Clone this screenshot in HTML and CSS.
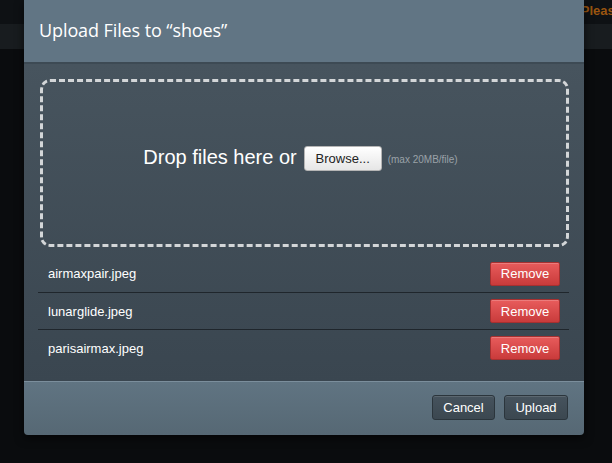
FILE: index.html
```html
<!DOCTYPE html>
<html>
<head>
<meta charset="utf-8">
<link rel="stylesheet" href="styles.css">
</head>
<body>
<div class="page">
  <div class="topbar"><span class="please">Please</span></div>
  <div class="band"></div>
</div>
<div class="modal">
  <div class="modal-header"><h1 class="title">Upload Files to “shoes”</h1></div>
  <div class="modal-body">
    <div class="dropzone">
      <span class="drop-text">Drop files here or</span>
      <button class="browse">Browse...</button>
      <span class="limit">(max 20MB/file)</span>
    </div>
    <ul class="files">
      <li class="file"><span class="name">airmaxpair.jpeg</span><button class="remove">Remove</button></li>
      <li class="file"><span class="name">lunarglide.jpeg</span><button class="remove">Remove</button></li>
      <li class="file"><span class="name">parisairmax.jpeg</span><button class="remove">Remove</button></li>
    </ul>
  </div>
  <div class="modal-footer">
    <button class="btn cancel">Cancel</button>
    <button class="btn upload">Upload</button>
  </div>
</div>
</body>
</html>
```

FILE: styles.css
```css
* { box-sizing: border-box; }
html, body { margin: 0; padding: 0; }
body {
  width: 612px;
  height: 463px;
  overflow: hidden;
  background: #0a0c0e;
  font-family: "Liberation Sans", Arial, sans-serif;
  position: relative;
}
.page { width: 100%; }
.topbar {
  height: 24px;
  background: #0e1114;
  display: flex;
  justify-content: flex-end;
  align-items: flex-start;
}
.please {
  color: #9a5510;
  font-weight: bold;
  font-size: 13px;
  line-height: 13px;
  margin-top: 4px;
  margin-right: -10px;
}
.band {
  height: 25px;
  background: #181c1f;
}
.modal {
  position: absolute;
  left: 24px;
  top: 0;
  width: 560px;
  border-radius: 0 0 4px 4px;
  overflow: hidden;
  box-shadow: 0 3px 10px rgba(0,0,0,0.6);
}
.modal-header {
  height: 64px;
  background: #617584;
  border-bottom: 2px solid #3d4a54;
  display: flex;
  align-items: center;
  padding: 0 15px 2px;
}
.title {
  margin: 0;
  font-family: "Open Sans", "DejaVu Sans", sans-serif;
  font-weight: normal;
  font-size: 18px;
  color: #ffffff;
  letter-spacing: -0.1px;
}
.modal-body {
  background: linear-gradient(#47545e, #3a4650);
  padding: 15px 15px 15px 14px;
}
.dropzone {
  height: 168px;
  margin-left: 2px;
  border: 3px dashed #d3d6d8;
  border-radius: 10px;
  display: flex;
  align-items: center;
  justify-content: center;
  padding: 0 8px 12px 0;
}
.drop-text {
  color: #ffffff;
  font-size: 20px;
  margin-right: 7px;
}
.browse {
  width: 78px;
  height: 25px;
  border: 1px solid #b5b5b5;
  border-radius: 3px;
  background: linear-gradient(#ffffff, #e6e6e6);
  color: #222;
  font-family: "Liberation Sans", Arial, sans-serif;
  font-size: 13px;
  padding: 0;
  margin-top: 2px;
}
.limit {
  color: #9aa2a8;
  font-size: 10px;
  margin-left: 6px;
  margin-top: 4px;
}
.files {
  list-style: none;
  margin: 8px 0 0;
  padding: 0;
}
.file {
  height: 37px;
  display: flex;
  align-items: center;
  justify-content: space-between;
  padding: 0 9px 0 10px;
  border-top: 1px solid #1f262c;
}
.file:first-child { border-top: none; height: 37px; }
.name {
  color: #ffffff;
  font-size: 13px;
}
.remove {
  width: 70px;
  height: 24px;
  border: 1px solid #a73030;
  border-radius: 2px;
  background: linear-gradient(#e85c5c, #c93b3b);
  color: #ffffff;
  font-family: "Liberation Sans", Arial, sans-serif;
  font-size: 13px;
  padding: 0;
  box-shadow: inset 0 1px 0 rgba(255,255,255,0.2);
}
.modal-footer {
  height: 54px;
  background: linear-gradient(#607482, #566874);
  border-top: 1px solid #7b8e9c;
  display: flex;
  justify-content: flex-end;
  align-items: flex-start;
  gap: 9px;
  padding: 13px 16px 0 0;
}
.btn {
  height: 25px;
  border: 1px solid #2b353c;
  border-radius: 3px;
  background: linear-gradient(#46535d, #3b4750);
  color: #ffffff;
  font-family: "Liberation Sans", Arial, sans-serif;
  font-size: 13px;
  padding: 0;
  box-shadow: inset 0 1px 0 rgba(255,255,255,0.12);
}
.cancel { width: 63px; }
.upload { width: 64px; }
```
